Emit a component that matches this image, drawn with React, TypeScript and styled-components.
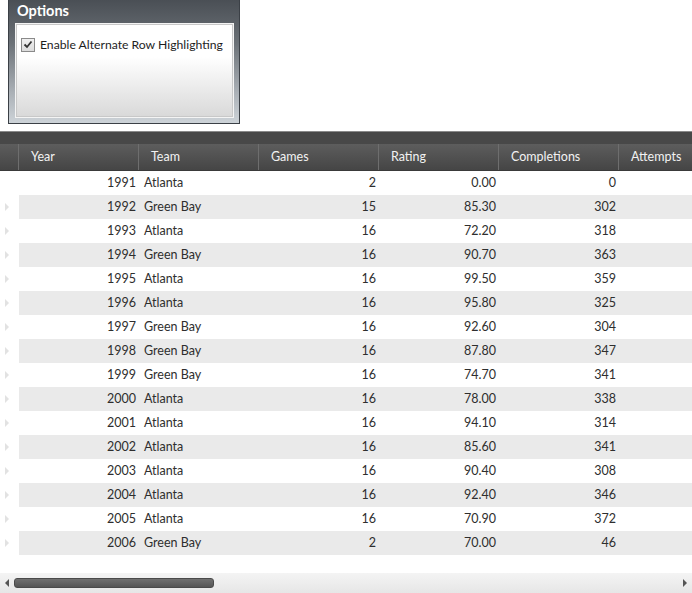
import * as React from "react";
import styled, { createGlobalStyle } from "styled-components";

const GlobalStyle = createGlobalStyle`
  html, body {
    margin: 0;
    padding: 0;
    background: #ffffff;
  }
  body {
    font-family: Lato, "Noto Sans", "DejaVu Sans", sans-serif;
    width: 692px;
    height: 593px;
    overflow: hidden;
  }
`;

const Page = styled.div`
  display: flex;
  flex-direction: column;
  width: 692px;
  height: 593px;
`;

const OptionsPanel = styled.div`
  margin-left: 8px;
  width: 232px;
  height: 124px;
  border: 1px solid #3b4046;
  border-top: none;
  background: linear-gradient(to bottom, #4a4f55 0%, #6b7177 35%, #aab0b6 75%, #cdd3d8 100%);
  display: flex;
  flex-direction: column;
  padding: 0 6px 6px 7px;
  box-sizing: border-box;
`;

const PanelTitle = styled.div`
  color: #ffffff;
  font-weight: 700;
  font-size: 14.5px;
  line-height: 22px;
  height: 24px;
  margin-left: 1px;
`;

const PanelBody = styled.div`
  flex: 1;
  border: 1px solid #c8c8c8;
  box-shadow: 0 0 0 1px #f4f4f4;
  background: linear-gradient(to bottom, #ffffff 0%, #ffffff 35%, #d9d9d9 100%);
  padding: 12px 0 0 4px;
`;

const CheckRow = styled.label`
  display: flex;
  align-items: center;
  gap: 5px;
  font-size: 12.2px;
  color: #1e1e1e;
  white-space: nowrap;
`;

const CheckBox = styled.span`
  width: 12px;
  height: 12px;
  border: 1px solid #8a8a8a;
  background: linear-gradient(to bottom, #f0f0f0, #dcdcdc);
  display: flex;
  align-items: center;
  justify-content: center;
`;

const Grid = styled.div`
  margin-top: 7px;
  flex: 1;
  display: flex;
  flex-direction: column;
`;

const TopBar = styled.div`
  height: 12px;
  background: #484848;
  border-top: 1px solid #8a8a8a;
`;

const HeaderRow = styled.div`
  display: flex;
  height: 26px;
  background: linear-gradient(to bottom, #5d5d5d, #454545);
  border-bottom: 1px solid #3a3a3a;
`;

const HeaderCell = styled.div<{ $w: number }>`
  width: ${(p) => p.$w}px;
  flex: none;
  box-sizing: border-box;
  border-right: 1px solid #6e6e6e;
  color: #f2f2f2;
  font-size: 12.5px;
  line-height: 26px;
  padding-left: 12px;
  white-space: nowrap;
  overflow: hidden;
`;

const Row = styled.div`
  display: flex;
  height: 24px;
`;

const RowHeader = styled.div`
  width: 19px;
  flex: none;
  display: flex;
  align-items: center;
  padding-left: 5px;
  box-sizing: border-box;
`;

const Cells = styled.div<{ $alt: boolean }>`
  flex: 1;
  display: flex;
  background: ${(p) => (p.$alt ? "#eaeaea" : "#ffffff")};
`;

const Cell = styled.div<{ $w: number; $right?: boolean }>`
  width: ${(p) => p.$w}px;
  flex: none;
  box-sizing: border-box;
  font-size: 12.5px;
  line-height: 24px;
  color: #2e2e2e;
  text-align: ${(p) => (p.$right ? "right" : "left")};
  padding: ${(p) => (p.$right ? "0 3px 0 0" : "0 0 0 5px")};
  white-space: nowrap;
`;

const Spacer = styled.div`
  flex: 1;
`;

const ScrollBar = styled.div`
  height: 20px;
  background: linear-gradient(to bottom, #f4f4f4, #e6e6e6);
  display: flex;
  align-items: center;
  padding: 0 5px;
  gap: 5px;
`;

const Thumb = styled.div`
  width: 200px;
  height: 10px;
  border-radius: 3px;
  background: linear-gradient(to bottom, #707070, #555555);
  border: 1px solid #4a4a4a;
  box-sizing: border-box;
`;

const Track = styled.div`
  flex: 1;
`;

const Arrow = ({ dir, color }: { dir: "left" | "right"; color: string }) => (
  <svg width="4" height="8" viewBox="0 0 4 8">
    {dir === "left" ? (
      <polygon points="4,0 0,4 4,8" fill={color} />
    ) : (
      <polygon points="0,0 4,4 0,8" fill={color} />
    )}
  </svg>
);

const columns = [
  { title: "Year", w: 120 },
  { title: "Team", w: 120 },
  { title: "Games", w: 120 },
  { title: "Rating", w: 120 },
  { title: "Completions", w: 120 },
  { title: "Attempts", w: 80 },
];

const data: [number, string, number, string, number][] = [
  [1991, "Atlanta", 2, "0.00", 0],
  [1992, "Green Bay", 15, "85.30", 302],
  [1993, "Atlanta", 16, "72.20", 318],
  [1994, "Green Bay", 16, "90.70", 363],
  [1995, "Atlanta", 16, "99.50", 359],
  [1996, "Atlanta", 16, "95.80", 325],
  [1997, "Green Bay", 16, "92.60", 304],
  [1998, "Green Bay", 16, "87.80", 347],
  [1999, "Green Bay", 16, "74.70", 341],
  [2000, "Atlanta", 16, "78.00", 338],
  [2001, "Atlanta", 16, "94.10", 314],
  [2002, "Atlanta", 16, "85.60", 341],
  [2003, "Atlanta", 16, "90.40", 308],
  [2004, "Atlanta", 16, "92.40", 346],
  [2005, "Atlanta", 16, "70.90", 372],
  [2006, "Green Bay", 2, "70.00", 46],
];

const App = () => (
  <Page>
    <GlobalStyle />
    <OptionsPanel>
      <PanelTitle>Options</PanelTitle>
      <PanelBody>
        <CheckRow>
          <CheckBox>
            <svg width="10" height="9" viewBox="0 0 10 9">
              <path d="M1.5 4.5 L4 7 L8.5 1.5" stroke="#333" strokeWidth="1.8" fill="none" />
            </svg>
          </CheckBox>
          Enable Alternate Row Highlighting
        </CheckRow>
      </PanelBody>
    </OptionsPanel>

    <Grid>
      <TopBar />
      <HeaderRow>
        <HeaderCell $w={19} style={{ paddingLeft: 0 }} />
        {columns.map((c) => (
          <HeaderCell key={c.title} $w={c.w}>
            {c.title}
          </HeaderCell>
        ))}
      </HeaderRow>
      {data.map((r, i) => (
        <Row key={r[0]}>
          <RowHeader>{i > 0 && <Arrow dir="right" color="#e2e2e2" />}</RowHeader>
          <Cells $alt={i % 2 === 1}>
            <Cell $w={120} $right>{r[0]}</Cell>
            <Cell $w={120}>{r[1]}</Cell>
            <Cell $w={120} $right>{r[2]}</Cell>
            <Cell $w={120} $right>{r[3]}</Cell>
            <Cell $w={120} $right>{r[4]}</Cell>
          </Cells>
        </Row>
      ))}
      <Spacer />
      <ScrollBar>
        <Arrow dir="left" color="#555" />
        <Thumb />
        <Track />
        <Arrow dir="right" color="#555" />
      </ScrollBar>
    </Grid>
  </Page>
);

export default App;
